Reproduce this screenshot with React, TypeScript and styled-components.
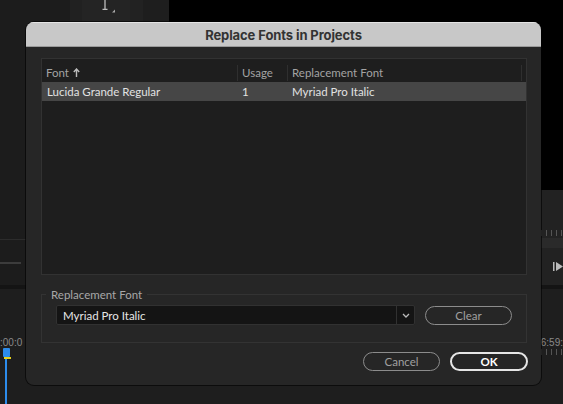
import React from "react";
import styled, { createGlobalStyle } from "styled-components";

const Global = createGlobalStyle`
  html, body { margin: 0; padding: 0; background: #000; overflow: hidden; }
  #root { width: 563px; height: 404px; }
`;

const Stage = styled.div`
  position: relative;
  width: 563px;
  height: 404px;
  overflow: hidden;
  background: #1e1e1e;
  display: flex;
  flex-direction: column;
  font-family: Lato, "Open Sans", sans-serif;
`;

/* ---------- background editor ---------- */
const TopArea = styled.div`
  height: 285px;
  display: flex;
`;
const SourcePanel = styled.div`
  width: 169px;
  display: flex;
  background: #1c1c1c;
`;
const SideStrip = styled.div`
  width: 70px;
  display: flex;
  flex-direction: column;
  justify-content: flex-start;
  padding-top: 239px;
  gap: 22px;
`;
const HLine = styled.div`
  height: 1px;
  background: #2c2c2c;
`;
const Slider = styled.div`
  width: 21px;
  height: 2px;
  background: #3c3c3c;
`;
const ToolCol = styled.div<{ $bg: string; $w: number }>`
  width: ${(p) => p.$w}px;
  background: ${(p) => p.$bg};
  display: flex;
  justify-content: center;
`;
const ToolGlyph = styled.div`
  display: flex;
  padding-left: 8px;
`;
const MonitorCol = styled.div`
  flex: 1;
  display: flex;
  flex-direction: column;
`;
const Monitor = styled.div`
  height: 190px;
  background: #000;
`;
const Controls = styled.div`
  flex: 1;
  background: #222;
  display: flex;
  flex-direction: column;
  padding-top: 40px;
  align-items: flex-end;
`;
const Ticks = styled.div`
  height: 6px;
  width: 22px;
  background: repeating-linear-gradient(90deg, #555 0 1px, transparent 1px 5px);
`;
const Band = styled.div`
  height: 10px;
  align-self: stretch;
  background: #2a2a2a;
  margin-top: 2px;
`;
const PlayIcon = styled.div`
  margin-top: 14px;
  width: 10px;
  height: 9px;
  display: flex;
`;
const Divider = styled.div`
  height: 4px;
  background: #141414;
`;
const Timeline = styled.div`
  flex: 1;
  display: flex;
  justify-content: space-between;
  padding-top: 48px;
`;
const TimeCol = styled.div<{ $right?: boolean }>`
  position: relative;
  display: flex;
  flex-direction: column;
  align-items: ${(p) => (p.$right ? "flex-end" : "flex-start")};
  width: 40px;
`;
const TimeCode = styled.div`
  color: #8a8a8a;
  font-size: 10px;
  line-height: 12px;
  font-family: "Liberation Sans", sans-serif;
  white-space: nowrap;
`;
const Playhead = styled.div`
  position: absolute;
  left: 5px;
  top: 13px;
  width: 2px;
  height: 60px;
  background: #2d8ceb;
`;
const PlayheadCap = styled.div`
  position: absolute;
  left: 3px;
  top: 11px;
  width: 7px;
  height: 9px;
  background: #2d8ceb;
  border-radius: 1px;
`;
const Marker = styled.div`
  position: absolute;
  left: 4px;
  top: 20px;
  width: 7px;
  height: 2px;
  background: #e8d21a;
`;

/* ---------- dialog ---------- */
const Dialog = styled.div`
  position: absolute;
  left: 26px;
  top: 22px;
  width: 515px;
  height: 363px;
  border-radius: 8px;
  background: #262626;
  overflow: hidden;
  display: flex;
  flex-direction: column;
  box-shadow: 0 0 0 1px rgba(0, 0, 0, 0.6);
`;
const TitleBar = styled.div`
  height: 26px;
  background: #c8c8c8;
  border-top: 1px solid #e4e4e4;
  border-bottom: 1px solid #9a9a9a;
  box-sizing: border-box;
  display: flex;
  align-items: center;
  justify-content: center;
  color: #333;
  font-family: Inter, "Noto Sans", sans-serif;
  font-weight: 700;
  font-size: 13px;
  letter-spacing: -0.1px;
`;
const Body = styled.div`
  flex: 1;
  display: flex;
  flex-direction: column;
  padding: 11px 14px 14px 15px;
`;
const Table = styled.div`
  height: 217px;
  box-sizing: border-box;
  background: #1e1e1e;
  border: 1px solid #323232;
  display: flex;
  flex-direction: column;
`;
const HeaderRow = styled.div`
  display: grid;
  grid-template-columns: 195px 50px 234px 1fr;
  height: 23px;
  align-items: center;
  padding-top: 4px;
  box-sizing: border-box;
`;
const HeaderCell = styled.div<{ $sep?: boolean }>`
  height: 16px;
  display: flex;
  align-items: center;
  gap: 4px;
  padding-left: 4px;
  color: #a3a3a3;
  font-size: 11.5px;
  border-left: ${(p) => (p.$sep ? "1px solid #2f2f2f" : "none")};
`;
const Row = styled.div<{ $selected?: boolean }>`
  display: grid;
  grid-template-columns: 195px 50px 1fr;
  height: 19px;
  align-items: center;
  background: ${(p) => (p.$selected ? "#464646" : "transparent")};
`;
const Cell = styled.div`
  padding-left: 5px;
  color: #e2e2e2;
  font-size: 11.5px;
`;
const Fieldset = styled.fieldset`
  margin: 13px 0 0 0;
  padding: 4px 13px 17px 14px;
  border: 1px solid #333;
  min-height: 0;
  display: flex;
  align-items: center;
  gap: 10px;
`;
const Legend = styled.legend`
  padding: 0 5px;
  margin-left: -10px;
  color: #a8a8a8;
  font-size: 11.5px;
  line-height: 13px;
`;
const Select = styled.div`
  width: 359px;
  height: 20px;
  box-sizing: border-box;
  display: flex;
  border: 1px solid #313131;
  background: #141414;
  border-radius: 2px;
`;
const SelectValue = styled.div`
  flex: 1;
  padding-left: 6px;
  display: flex;
  align-items: center;
  color: #e6e6e6;
  font-size: 11.5px;
`;
const SelectChevron = styled.div`
  width: 17px;
  border-left: 1px solid #313131;
  display: flex;
  align-items: center;
  justify-content: center;
`;
const PillButton = styled.button<{ $primary?: boolean; $w: number }>`
  width: ${(p) => p.$w}px;
  height: 19px;
  box-sizing: border-box;
  border-radius: 10px;
  background: transparent;
  border: ${(p) => (p.$primary ? "2px solid #e6e6e6" : "1.5px solid #8c8c8c")};
  color: ${(p) => (p.$primary ? "#fff" : "#a0a0a0")};
  font-family: Lato, "Open Sans", sans-serif;
  font-weight: ${(p) => (p.$primary ? 700 : 400)};
  font-size: 11.5px;
  display: flex;
  align-items: center;
  justify-content: center;
  padding: 0;
`;
const Footer = styled.div`
  display: flex;
  justify-content: flex-end;
  gap: 10px;
  margin-top: 9px;
  margin-right: -1px;
`;

export default function App() {
  return (
    <Stage>
      <Global />
      <TopArea>
        <SourcePanel>
          <SideStrip>
            <HLine />
            <Slider />
          </SideStrip>
          <ToolCol $bg="#212121" $w={12} />
          <ToolCol $bg="#242424" $w={48}>
            <ToolGlyph>
              <svg width="16" height="14" viewBox="0 0 16 14">
                <path d="M3 0 V9 M0.5 9.3 H5.5" stroke="#bdbdbd" strokeWidth="1.3" fill="none" />
                <path d="M10 12.5 L13 12.5 L13 9.5 Z" fill="#aaa" />
              </svg>
            </ToolGlyph>
          </ToolCol>
          <ToolCol $bg="#222" $w={13} />
          <ToolCol $bg="#1e1e1e" $w={26} />
        </SourcePanel>
        <MonitorCol>
          <Monitor />
          <Controls>
            <Ticks />
            <Band />
            <PlayIcon>
              <svg width="10" height="9" viewBox="0 0 10 9">
                <rect x="0" y="0" width="1.5" height="9" fill="#bbb" />
                <path d="M3 0 L10 4.5 L3 9 Z" fill="#bbb" />
              </svg>
            </PlayIcon>
          </Controls>
        </MonitorCol>
      </TopArea>
      <Divider />
      <Timeline>
        <TimeCol>
          <TimeCode>:00:0</TimeCode>
          <PlayheadCap />
          <Playhead />
          <Marker />
        </TimeCol>
        <TimeCol $right>
          <TimeCode>6:59:</TimeCode>
          <Ticks />
        </TimeCol>
      </Timeline>

      <Dialog>
        <TitleBar>Replace Fonts in Projects</TitleBar>
        <Body>
          <Table>
            <HeaderRow>
              <HeaderCell>
                Font
                <svg width="7" height="9" viewBox="0 0 7 9">
                  <path d="M3.5 9 V1.5 M0.8 4 L3.5 1 L6.2 4" stroke="#bbb" strokeWidth="1.4" fill="none" />
                </svg>
              </HeaderCell>
              <HeaderCell $sep>Usage</HeaderCell>
              <HeaderCell $sep>Replacement Font</HeaderCell>
              <HeaderCell $sep />
            </HeaderRow>
            <Row $selected>
              <Cell>Lucida Grande Regular</Cell>
              <Cell>1</Cell>
              <Cell>Myriad Pro Italic</Cell>
            </Row>
          </Table>
          <Fieldset>
            <Legend>Replacement Font</Legend>
            <Select>
              <SelectValue>Myriad Pro Italic</SelectValue>
              <SelectChevron>
                <svg width="8" height="5" viewBox="0 0 8 5">
                  <path d="M1 1 L4 4 L7 1" stroke="#bbb" strokeWidth="1.3" fill="none" />
                </svg>
              </SelectChevron>
            </Select>
            <PillButton $w={87}>Clear</PillButton>
          </Fieldset>
          <Footer>
            <PillButton $w={77}>Cancel</PillButton>
            <PillButton $w={78} $primary>OK</PillButton>
          </Footer>
        </Body>
      </Dialog>
    </Stage>
  );
}
